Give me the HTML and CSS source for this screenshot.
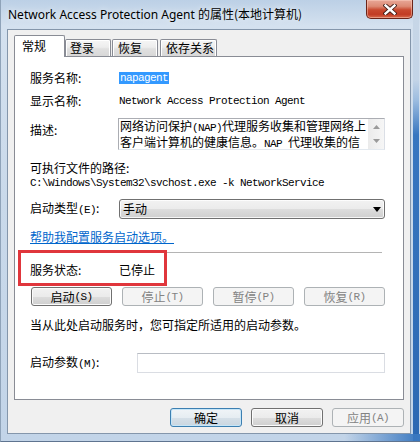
FILE: index.html
```html
<!DOCTYPE html>
<html lang="zh-CN">
<head>
<meta charset="utf-8">
<title>Network Access Protection Agent 的属性(本地计算机)</title>
<link rel="stylesheet" href="styles.css">
</head>
<body>
<div class="window">
  <div class="titlebar">
    <div class="title">Network Access Protection Agent <span class="title-cjk">的属性(本地计算机)</span></div>
    <div class="close">
      <svg width="14" height="11" viewBox="0 0 14 11">
        <path d="M2.5 1.5 L11.5 9.5 M11.5 1.5 L2.5 9.5" stroke="#3d1a14" stroke-width="4.2" stroke-linecap="square" fill="none"/>
        <path d="M2.5 1.5 L11.5 9.5 M11.5 1.5 L2.5 9.5" stroke="#ffffff" stroke-width="2.4" stroke-linecap="square" fill="none"/>
      </svg>
    </div>
  </div>
  <div class="client">
    <div class="tabs">
      <div class="tab active t1">常规</div>
      <div class="tab t2">登录</div>
      <div class="tab t3">恢复</div>
      <div class="tab t4">依存关系</div>
    </div>
    <div class="panel">
      <div class="row r-name">
        <div class="label">服务名称:</div>
        <div class="value mono"><span class="sel">napagent</span></div>
      </div>
      <div class="row r-disp">
        <div class="label">显示名称:</div>
        <div class="value mono">Network Access Protection Agent</div>
      </div>
      <div class="row r-desc">
        <div class="label">描述:</div>
        <div class="desc">
          <div class="desc-text">
            <div>网络访问保护<span class="asc">(NAP)</span>代理服务收集和管理网络上</div>
            <div>客户端计算机的健康信息。<span class="asc">NAP </span>代理收集的信</div>
          </div>
          <div class="scroll">
            <svg width="7" height="4" viewBox="0 0 7 4"><path d="M3.5 0 L7 4 L0 4 Z" fill="#9a9a9a"/></svg>
            <svg width="7" height="4" viewBox="0 0 7 4"><path d="M0 0 L7 0 L3.5 4 Z" fill="#9a9a9a"/></svg>
          </div>
        </div>
      </div>
      <div class="exe-label">可执行文件的路径:</div>
      <div class="exe-path mono">C:\Windows\System32\svchost.exe -k NetworkService</div>
      <div class="row r-type">
        <div class="label">启动类型<span class="asc">(E)</span>:</div>
        <div class="combo">
          <span>手动</span>
          <svg width="8" height="5" viewBox="0 0 8 5"><path d="M0 0 L8 0 L4 5 Z" fill="#000"/></svg>
        </div>
      </div>
      <a class="link" href="#">帮助我配置服务启动选项。</a>
      <div class="sep"></div>
      <div class="row r-status">
        <div class="label">服务状态:</div>
        <div class="value">已停止</div>
      </div>
      <div class="btns">
        <div class="btn">启动<span class="asc">(S)</span></div>
        <div class="btn dis">停止<span class="asc">(T)</span></div>
        <div class="btn dis">暂停<span class="asc">(P)</span></div>
        <div class="btn dis">恢复<span class="asc">(R)</span></div>
      </div>
      <div class="hint">当从此处启动服务时，您可指定所适用的启动参数。</div>
      <div class="row r-param">
        <div class="label">启动参数<span class="asc">(M)</span>:</div>
        <div class="input"></div>
      </div>
      <div class="redbox"></div>
    </div>
    <div class="footer">
      <div class="btn def">确定</div>
      <div class="btn">取消</div>
      <div class="btn dis">应用<span class="asc">(A)</span></div>
    </div>
  </div>
</div>
</body>
</html>
```

FILE: styles.css
```css
* { box-sizing: border-box; }
html, body { margin: 0; padding: 0; }
body {
  width: 420px;
  height: 442px;
  overflow: hidden;
  font-family: "Noto Sans CJK SC", "Noto Sans", sans-serif;
  font-size: 12px;
  color: #000;
}
.window {
  width: 420px;
  height: 442px;
  display: flex;
  flex-direction: column;
  border-left: 1px solid #8fa3b9;
  border-bottom: 1px solid #5f7490;
  padding: 0 9px 7px 6px;
  background:
    linear-gradient(90deg, rgba(58,120,192,0) 0%, rgba(58,120,192,0) 82%, #3a78c0 100%) left bottom / 100% 7px no-repeat,
    linear-gradient(180deg, #c8d7e7 0px, #c3d4e7 80px, #9dbde0 100px, #3776c0 135px, #2c68b2 100%) right 1px top 0 / 6px 100% no-repeat,
    linear-gradient(180deg, #bcd0e6 0px, #d4e1ef 26px, #c9d9ea 200px, #c2d4e8 100%);
}
.titlebar {
  height: 29px;
  flex: none;
  display: flex;
  align-items: flex-start;
}
.title {
  margin: 6px 0 0 1px;
  font-family: "Noto Sans", "Noto Sans CJK SC", sans-serif;
  font-size: 12px;
  line-height: 16px;
  white-space: nowrap;
  text-shadow: 0 0 6px rgba(255,255,255,0.9);
}
.title-cjk { font-family: "Noto Sans CJK SC", sans-serif; }
.close {
  margin-left: auto;
  margin-right: -2px;
  width: 47px;
  height: 19px;
  border: 1px solid #6b2418;
  border-top: none;
  border-radius: 0 0 5px 5px;
  background: linear-gradient(180deg, #e8a797 0%, #dd8a74 35%, #c9492f 55%, #c23c24 80%, #d86a4c 100%);
  box-shadow: inset 0 0 0 1px rgba(255,215,200,0.45);
  display: flex;
  align-items: center;
  justify-content: center;
}
.client {
  flex: 1;
  display: flex;
  flex-direction: column;
  background: #f0f0f0;
  border: 1px solid #8496ab;
  padding: 5px 6px 6px 6px;
}
.tabs {
  height: 21px;
  flex: none;
  display: flex;
  align-items: flex-end;
}
.tab {
  height: 17px;
  border: 1px solid #898c95;
  border-bottom: none;
  border-radius: 2px 2px 0 0;
  background: linear-gradient(180deg, #f6f6f6 0%, #ededed 45%, #e0e0e0 55%, #d8d8d8 100%);
  box-shadow: inset 1px 1px 0 #ffffff, inset -1px 0 0 #ffffff;
  padding-left: 4px;
  line-height: 16px;
  white-space: nowrap;
}
.tab.active {
  height: 22px;
  margin-bottom: -1px;
  background: #ffffff;
  box-shadow: none;
  position: relative;
  z-index: 1;
  padding-left: 7px;
  line-height: 20px;
}
.t1 { width: 51px; }
.t2 { width: 46px; }
.t3 { width: 46px; margin-left: 1px; padding-left: 5px; }
.t4 { width: 57px; margin-left: 2px; padding-left: 5px; }
.panel {
  height: 344px;
  flex: none;
  border: 1px solid #898c95;
  background: #ffffff;
  padding: 14px 18px 0 15px;
  position: relative;
}
.row { display: flex; align-items: center; }
.label { width: 89px; flex: none; line-height: 14px; white-space: nowrap; }
.value { line-height: 14px; white-space: nowrap; }
.mono {
  font-family: "Liberation Mono", monospace;
  font-size: 11px;
  letter-spacing: -0.6px;
}
.asc {
  font-family: "Liberation Mono", monospace;
  font-size: 11px;
  letter-spacing: -0.6px;
}
.sel { background: #3399ff; color: #ffffff; padding: 0 1px; }
.r-name { height: 14px; }
.r-disp { height: 14px; margin-top: 9px; }
.r-desc { height: 32px; margin-top: 10px; align-items: flex-start; }
.r-desc .label { padding-top: 5px; }
.desc {
  width: 267px;
  height: 32px;
  margin-left: -1px;
  border: 1px solid #abadb3;
  border-right-color: #dbdfe6;
  border-bottom-color: #e3e9ef;
  display: flex;
}
.desc-text { flex: 1; min-width: 0; padding-left: 1px; line-height: 14px; }
.desc-text div { white-space: nowrap; }
.scroll {
  width: 16px;
  flex: none;
  background: linear-gradient(90deg, #ebebeb, #f6f6f6);
  display: flex;
  flex-direction: column;
  justify-content: space-between;
  align-items: center;
  padding: 6px 0 6px;
}
.scroll svg { display: block; }
.exe-label { margin-top: 11px; line-height: 14px; }
.exe-path { margin-top: 1px; line-height: 14px; white-space: nowrap; }
.r-type { height: 20px; margin-top: 9px; }
.combo {
  width: 266px;
  height: 20px;
  border: 1px solid #707070;
  border-radius: 3px;
  background: linear-gradient(180deg, #f2f2f2 0%, #ebebeb 50%, #dddddd 51%, #cfcfcf 100%);
  box-shadow: inset 0 0 0 1px rgba(255,255,255,0.8);
  display: flex;
  align-items: center;
  justify-content: space-between;
  padding: 0 3px 0 3px;
  line-height: 14px;
}
.combo svg { display: block; }
.link {
  display: block;
  width: max-content;
  margin-top: 11px;
  line-height: 14px;
  color: #0066cc;
  text-decoration: underline;
}
.sep { width: 352px; height: 1px; margin-top: 8px; background: #b4b4b4; }
.r-status { height: 14px; margin-top: 10px; }
.btns {
  height: 19px;
  margin-top: 10px;
  margin-left: 1px;
  display: grid;
  grid-template-columns: repeat(4, 81px);
  column-gap: 10px;
}
.btn {
  height: 19px;
  border: 1px solid #707070;
  border-radius: 3px;
  background: linear-gradient(180deg, #f2f2f2 0%, #ebebeb 50%, #dddddd 51%, #cfcfcf 100%);
  box-shadow: inset 0 0 0 1px #fbfbfb;
  display: flex;
  align-items: center;
  justify-content: center;
  line-height: 14px;
  white-space: nowrap;
}
.btn.dis {
  border-color: #adb2b5;
  background: #f4f4f4;
  color: #838383;
  box-shadow: none;
}
.btn.def {
  border-color: #3c7fb1;
  background: linear-gradient(180deg, #f0f4f7 0%, #e6edf2 50%, #d6e0e8 51%, #cad6e0 100%);
  box-shadow: inset 0 0 0 1px #c6e6f8;
}
.hint { margin-top: 12px; line-height: 14px; white-space: nowrap; }
.r-param { height: 20px; margin-top: 21px; }
.r-param .label { width: 107px; }
.input {
  width: 248px;
  height: 20px;
  border: 1px solid #dadde3;
  border-top-color: #b8bcc3;
}
.redbox {
  position: absolute;
  left: 3px;
  top: 193px;
  width: 149px;
  height: 36px;
  border: 3px solid #e0363c;
}
.footer {
  height: 19px;
  margin-top: 8px;
  flex: none;
  display: flex;
  justify-content: flex-end;
  gap: 9px;
}
.footer .btn { width: 72px; }
```
